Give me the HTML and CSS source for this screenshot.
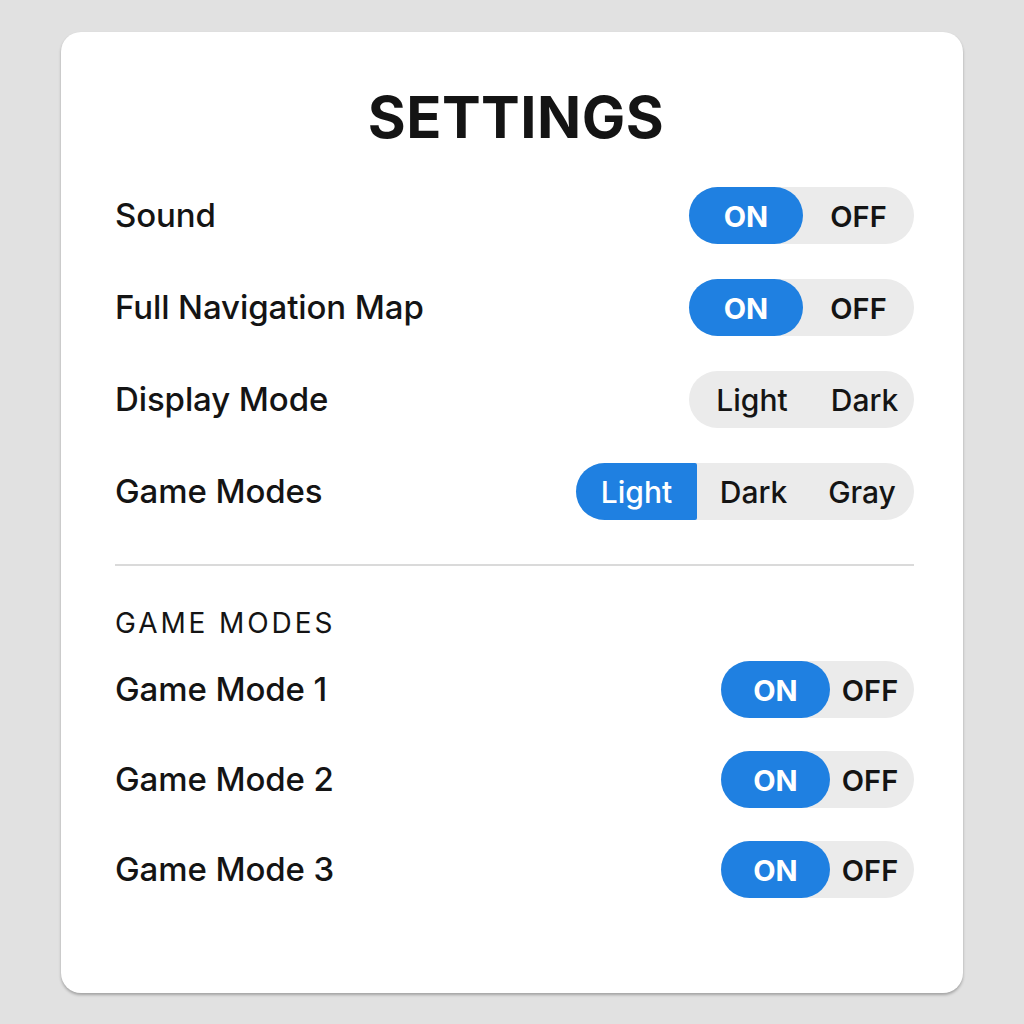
FILE: index.html
```html
<!DOCTYPE html>
<html>
<head>
<meta charset="utf-8">
<link rel="stylesheet" href="styles.css">
</head>
<body>
<div class="card">
  <h1 class="title">SETTINGS</h1>
  <div class="rows">
    <div class="row">
      <span class="label">Sound</span>
      <div class="seg seg-onoff"><span class="opt on active">ON</span><span class="opt off">OFF</span></div>
    </div>
    <div class="row">
      <span class="label">Full Navigation Map</span>
      <div class="seg seg-onoff"><span class="opt on active">ON</span><span class="opt off">OFF</span></div>
    </div>
    <div class="row">
      <span class="label">Display Mode</span>
      <div class="seg seg-display"><span class="opt light">Light</span><span class="opt dark">Dark</span></div>
    </div>
    <div class="row">
      <span class="label">Game Modes</span>
      <div class="seg seg-modes"><span class="opt light active square">Light</span><span class="opt dark">Dark</span><span class="opt gray">Gray</span></div>
    </div>
  </div>
  <hr class="divider">
  <h2 class="section">GAME MODES</h2>
  <div class="rows rows-small">
    <div class="row">
      <span class="label">Game Mode 1</span>
      <div class="seg seg-small"><span class="opt on active">ON</span><span class="opt off">OFF</span></div>
    </div>
    <div class="row">
      <span class="label">Game Mode 2</span>
      <div class="seg seg-small"><span class="opt on active">ON</span><span class="opt off">OFF</span></div>
    </div>
    <div class="row">
      <span class="label">Game Mode 3</span>
      <div class="seg seg-small"><span class="opt on active">ON</span><span class="opt off">OFF</span></div>
    </div>
  </div>
</div>
</body>
</html>
```

FILE: styles.css
```css
html, body {
  margin: 0;
  padding: 0;
}
body {
  background: #e1e1e1;
  font-family: Inter, "Noto Sans", sans-serif;
  color: #141414;
  width: 1024px;
  height: 1024px;
  overflow: hidden;
}
.card {
  margin: 32px 0 0 61px;
  width: 902px;
  height: 961px;
  box-sizing: border-box;
  background: #ffffff;
  border-radius: 20px;
  box-shadow: 0 2px 3px rgba(0,0,0,0.28);
  padding: 51px 49px 0 54px;
}
.title {
  margin: 0;
  text-align: center;
  font-size: 58px;
  font-weight: 700;
  line-height: 68px;
  letter-spacing: 0.5px;
  padding-left: 3px;
}
.rows {
  display: flex;
  flex-direction: column;
  gap: 35px;
  margin-top: 36px;
}
.row {
  display: flex;
  align-items: center;
  justify-content: space-between;
  height: 57px;
}
.label {
  font-size: 33px;
  font-weight: 500;
  letter-spacing: -0.1px;
  padding-bottom: 2px;
}
.seg {
  display: flex;
  height: 57px;
  background: #ebebeb;
  border-radius: 29px;
  font-size: 30px;
  font-weight: 500;
}
.opt {
  display: flex;
  align-items: center;
  justify-content: center;
  height: 100%;
  padding-top: 1px;
  box-sizing: border-box;
}
.opt.active {
  background: #1f80e1;
  color: #ffffff;
  border-radius: 29px;
}
.opt.square {
  border-radius: 29px 2px 2px 29px;
  font-weight: 500;
}
.opt.on { font-weight: 700; font-size: 29px; }
.opt.off { font-weight: 600; font-size: 29px; }
.seg-onoff .on { width: 114px; }
.seg-onoff .off { width: 111px; }
.seg-display .light { width: 126px; }
.seg-display .dark { width: 99px; }
.seg-modes .light { width: 121px; }
.seg-modes .dark { width: 113px; }
.seg-modes .gray { width: 104px; }
.divider {
  border: 0;
  height: 2px;
  background: #dadada;
  margin: 44px 0 0 0;
}
.section {
  margin: 40px 0 0 0;
  font-size: 28px;
  font-weight: 400;
  letter-spacing: 2.9px;
  line-height: 34px;
}
.rows-small {
  gap: 33px;
  margin-top: 21px;
}
.seg-small .on { width: 109px; }
.seg-small .off { width: 84px; padding-right: 4px; }
```
